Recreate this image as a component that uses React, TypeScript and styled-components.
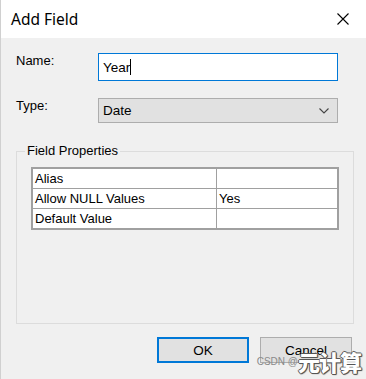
import styled, { createGlobalStyle } from "styled-components";

const GlobalStyle = createGlobalStyle`
    html, body {
        margin: 0;
        padding: 0;
        background: #ffffff;
    }
    #root {
        width: 366px;
        height: 379px;
    }
`;

const rows = [
    { name: 'Alias', value: '' },
    { name: 'Allow NULL Values', value: 'Yes' },
    { name: 'Default Value', value: '' },
];

export default function App() {
    return (
        <>
            <GlobalStyle/>
            <Window>
                <TitleBar>
                    <Title>Add Field</Title>
                    <CloseButton aria-label="Close">
                        <svg width="12" height="12" viewBox="0 0 12 12">
                            <path d="M0.5 0.5 L11.5 11.5 M11.5 0.5 L0.5 11.5" stroke="#000" strokeWidth="1.1" fill="none"/>
                        </svg>
                    </CloseButton>
                </TitleBar>
                <Body>
                    <FieldRow>
                        <Label>Name:</Label>
                        <TextBox>
                            Year<Caret/>
                        </TextBox>
                    </FieldRow>
                    <FieldRow $gap={17}>
                        <Label>Type:</Label>
                        <ComboBox>
                            <span>Date</span>
                            <svg width="10" height="6" viewBox="0 0 10 6">
                                <path d="M0.5 0.5 L5 5 L9.5 0.5" stroke="#444" strokeWidth="1.1" fill="none"/>
                            </svg>
                        </ComboBox>
                    </FieldRow>
                    <GroupBox>
                        <Legend>Field Properties</Legend>
                        <PropTable>
                            <tbody>
                            {rows.map((r) => (
                                <tr key={r.name}>
                                    <NameCell>{r.name}</NameCell>
                                    <ValueCell>{r.value}</ValueCell>
                                </tr>
                            ))}
                            </tbody>
                        </PropTable>
                    </GroupBox>
                    <ButtonRow>
                        <DialogButton $primary>OK</DialogButton>
                        <DialogButton>Cancel</DialogButton>
                    </ButtonRow>
                    <Watermark>
                        <SmallMark>CSDN @</SmallMark>
                        <BigMark>元计算</BigMark>
                    </Watermark>
                </Body>
            </Window>
        </>
    );
}

const Window = styled.div`
    position: relative;
    width: 366px;
    height: 379px;
    box-sizing: border-box;
    display: flex;
    flex-direction: column;
    border-left: 1px solid #d0d0d0;
    font-family: 'Liberation Sans', Arial, sans-serif;
    font-size: 13px;
    color: #000;
`;

const TitleBar = styled.div`
    height: 38px;
    flex-shrink: 0;
    display: flex;
    align-items: center;
    justify-content: space-between;
    padding: 0 17px 0 10px;
    background: #ffffff;
`;

const Title = styled.span`
    font-family: 'Noto Sans', 'Open Sans', sans-serif;
    font-size: 15.5px;
    color: #000;
    margin-top: -1px;
`;

const CloseButton = styled.span`
    display: flex;
    width: 12px;
    height: 12px;
`;

const Body = styled.div`
    flex: 1;
    display: flex;
    flex-direction: column;
    background: #f0f0f0;
    padding: 15px 0 0 15px;
`;

const FieldRow = styled.div<{ $gap?: number }>`
    display: flex;
    align-items: flex-start;
    margin-top: ${p => p.$gap ?? 0}px;
`;

const Label = styled.div`
    width: 82px;
    line-height: 15px;
`;

const TextBox = styled.div`
    width: 240px;
    height: 28px;
    box-sizing: border-box;
    border: 1px solid #0078d7;
    background: #ffffff;
    display: flex;
    align-items: center;
    padding-left: 4px;
    font-size: 13.5px;
`;

const Caret = styled.span`
    display: inline-block;
    width: 1px;
    height: 16px;
    background: #000;
`;

const ComboBox = styled.div`
    width: 240px;
    height: 25px;
    box-sizing: border-box;
    border: 1px solid #adadad;
    background: #e1e1e1;
    display: flex;
    align-items: center;
    justify-content: space-between;
    padding: 0 8px 0 4px;
    font-size: 13.5px;
`;

const GroupBox = styled.fieldset`
    margin: 20px 0 0 0;
    padding: 0;
    width: 338px;
    height: 181px;
    min-width: 0;
    box-sizing: border-box;
    border: 1px solid #dcdcdc;
`;

const Legend = styled.legend`
    margin-left: 8px;
    padding: 0 2px;
    line-height: 16px;
    font-size: 13px;
`;

const PropTable = styled.table`
    margin: 8px 0 0 14px;
    width: 308px;
    border-collapse: collapse;
    border: 2px solid #a0a0a0;
    background: #ffffff;
    font-size: 13px;

    td {
        height: 19px;
        padding: 0 0 0 2px;
        border: 1px solid #a0a0a0;
        line-height: 15px;
        vertical-align: middle;
    }
`;

const NameCell = styled.td`
    width: 181px;
`;

const ValueCell = styled.td``;

const ButtonRow = styled.div`
    display: flex;
    justify-content: flex-end;
    gap: 11px;
    margin: 13px 14px 0 0;
`;

const DialogButton = styled.div<{ $primary?: boolean }>`
    width: 92px;
    height: 26px;
    box-sizing: border-box;
    display: flex;
    align-items: center;
    justify-content: center;
    background: #e1e1e1;
    border: ${p => (p.$primary ? '2px solid #0078d7' : '1px solid #adadad')};
    font-size: 13.5px;
`;

const Watermark = styled.div`
    position: absolute;
    right: 5px;
    bottom: 5px;
    display: flex;
    align-items: flex-end;
    pointer-events: none;
`;

const SmallMark = styled.span`
    font-family: 'Liberation Sans', sans-serif;
    font-size: 10px;
    line-height: 12px;
    color: #8a8a8a;
    margin-bottom: 6px;
`;

const BigMark = styled.span`
    font-family: 'Noto Sans CJK SC', sans-serif;
    font-weight: 900;
    font-size: 22px;
    line-height: 26px;
    letter-spacing: -1px;
    color: #ffffff;
    text-shadow: 1px 0 0 #555, -1px 0 0 #555, 0 1px 0 #555, 0 -1px 0 #555, 1px 1px 1px #444;
`;
